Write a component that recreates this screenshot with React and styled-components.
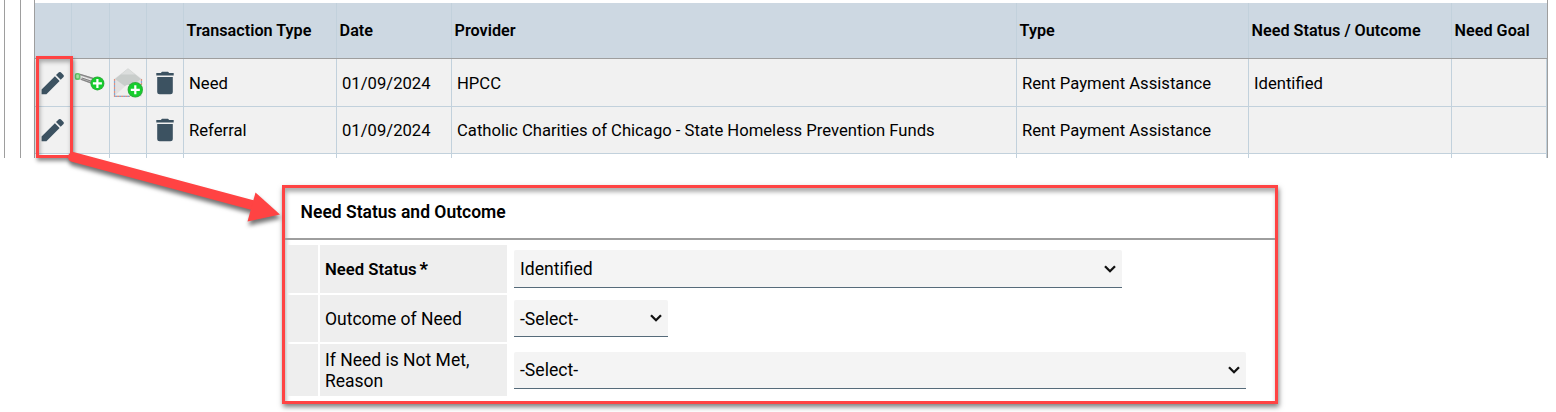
import React from 'react'
import styled, { createGlobalStyle } from 'styled-components'

const columns = ['', '', '', '', 'Transaction Type', 'Date', 'Provider', 'Type', 'Need Status / Outcome', 'Need Goal']

const transactions = [
  {
    id: 1,
    canAdd: true,
    cells: ['Need', '01/09/2024', 'HPCC', 'Rent Payment Assistance', 'Identified', '']
  },
  {
    id: 2,
    canAdd: false,
    cells: ['Referral', '01/09/2024', 'Catholic Charities of Chicago - State Homeless Prevention Funds', 'Rent Payment Assistance', '', '']
  }
]

const PencilIcon = () => (
  <Icon width='24' height='24' viewBox='0 0 24 24'>
    <path fill='#3c5261' d='M0.6 18.4 V23.2 H5.4 L18.6 10 L13.9 5.3 Z M19.7 8.8 L22.5 6 Q23.4 5 22.5 4 L19.8 1.3 Q18.8 .5 17.9 1.3 L15 4.1 Z' />
  </Icon>
)

const TrashIcon = () => (
  <Icon width='18' height='24' viewBox='0 0 18 24'>
    <path fill='#3c5261' d='M1.2 6 H16.8 V20.7 Q16.8 23.2 14.3 23.2 H3.7 Q1.2 23.2 1.2 20.7 Z M.3 2 H4.8 L6 .8 H12 L13.2 2 H17.7 V4.6 H.3 Z' />
  </Icon>
)

const Plus = ({ x, y, r }) => (
  <g>
    <circle cx={x} cy={y} r={r} fill='#2fae3c' />
    <circle cx={x} cy={y} r={r - 1} fill='#14cf2c' />
    <path d={`M${x - 4.5} ${y} h9 M${x} ${y - 4.5} v9`} stroke='#fff' strokeWidth='2.2' />
  </g>
)

const ServiceIcon = () => (
  <Icon width='32' height='24' viewBox='0 0 32 24'>
    <path d='M5 2.5 L25 8.5 L22 14.5 L4 8 Z' fill='#c2c2c2' />
    <path d='M6 3.4 L23 8.6 M7 8.2 L19 12.6' stroke='#858585' strokeWidth='1.2' />
    <path d='M7 5.6 L21 10.2' stroke='#ececec' strokeWidth='1.2' />
    <path d='M8 7 L18 10.4' stroke='#707070' strokeWidth='.8' />
    <rect x='.8' y='2' width='5.4' height='7' rx='2' fill='#62c66a' />
    <rect x='2.2' y='3.6' width='2.6' height='3.6' rx='1' fill='#a8e2a7' />
    <Plus x={23.4} y={12.4} r={7} />
  </Icon>
)

const ReferralIcon = () => (
  <Icon width='32' height='32' viewBox='0 0 32 32'>
    <path d='M2 12 L16 1.5 L30 12 V29.5 H2 Z' fill='#e2e1e1' />
    <path d='M3 12 L16 1.5 L29 12 L18 20 Q16 21 14 20 Z' fill='#c9cdcb' />
    <path d='M9 7.500 L16 1.500 L23 7.500 Z' fill='#dcdedd' />
    <path d='M3 28.500 L14 18.500 Q16 17 18 18.500 L29 28.500 Z' fill='#f0efee' />
    <path d='M2.5 12 V29.4 H18 M29.5 12 V18' fill='none' stroke='#e0907e' strokeWidth='1.2' strokeDasharray='2 2' />
    <path d='M2.5 14 V29.4 H18 M29.5 14 V18' fill='none' stroke='#86a6cf' strokeWidth='1.2' strokeDasharray='2 2' />
    <Plus x={23.3} y={22.8} r={7.7} />
  </Icon>
)

const Select = ({ width, height, children }) => (
  <SelectField $width={width} $height={height}>
    <Value>{children}</Value>
    <svg width='12' height='8' viewBox='0 0 12 8'>
      <path d='M1 1.2 L6 6.2 L11 1.2' fill='none' stroke='#111' strokeWidth='2.3' />
    </svg>
  </SelectField>
)

const App = () => (
  <Page>
    <GlobalStyle />
    <TableArea>
      <Gutter />
      <InnerGutter />
      <Table>
        <Row $head>
          {columns.map((name, i) => <HeadCell key={i}>{name}</HeadCell>)}
        </Row>
        {transactions.map(({ id, canAdd, cells }) => (
          <Row key={id} $height={id === 1 ? 48 : 47}>
            <IconCell $left={6}><PencilIcon /></IconCell>
            <IconCell $left={2}>{canAdd && <ServiceIcon />}</IconCell>
            <IconCell $left={2}>{canAdd && <ReferralIcon />}</IconCell>
            <IconCell $left={9}><TrashIcon /></IconCell>
            {cells.map((text, i) => <Cell key={i} $top={id === 1 ? 2 : 0}>{text}</Cell>)}
          </Row>
        ))}
        <Row $blank>
          {columns.map((name, i) => <Cell key={i} />)}
        </Row>
      </Table>
    </TableArea>
    <Panel>
      <PanelTitle>Need Status and Outcome</PanelTitle>
      <Form>
        <Field $height={48}>
          <Flag />
          <Label $required>Need Status<Star>*</Star></Label>
          <Select width={608} height={38}>Identified</Select>
        </Field>
        <Field $height={47}>
          <Flag />
          <Label>Outcome of Need</Label>
          <Select width={154} height={37}>-Select-</Select>
        </Field>
        <Field $height={52}>
          <Flag />
          <Label>If Need is Not Met, Reason</Label>
          <Select width={732} height={37}>-Select-</Select>
        </Field>
      </Form>
    </Panel>
    <Highlight />
    <Arrow width='230' height='90' viewBox='60 145 230 90'>
      <path d='M73 157 L254 205.500' stroke='#ff4343' strokeWidth='10' strokeLinecap='round' />
      <path d='M255.500 192.500 L280 214.500 L247.500 221.500 Z' fill='#ff4343' />
    </Arrow>
  </Page>
)

const GlobalStyle = createGlobalStyle`
  * {
    box-sizing: border-box;
  }
  body {
    margin: 0;
    background: #fff;
    color: #000;
    font-family: Roboto, sans-serif;
    font-size: 16.65px;
  }
`
const Page = styled.main`
  position: relative;
  width: 1556px;
  height: 412px;
  overflow: hidden;
`
const TableArea = styled.section`
  display: flex;
  height: 158px;
  padding-left: 4px;
`
const Gutter = styled.div`
  width: 16px;
  border-left: 1px solid #9e9e9e;
`
const InnerGutter = styled(Gutter)`
  width: 14px;
`
const Table = styled.div`
  width: 1514px;
  padding-top: 3px;
  border: solid #9e9e9e;
  border-width: 0 1px;
`
const Row = styled.div`
  display: grid;
  grid-template-columns: 37px 38px 37px 37px 153px 115px 565px 232px 203px 95px;
  height: ${({ $head, $blank, $height }) => $head ? 56 : $blank ? 4 : $height}px;
  background: ${({ $head, $blank }) => $head ? '#cdd8e2' : $blank ? '#fff' : '#f1f1f1'};
  border-bottom: ${({ $head, $blank }) => $blank ? '0' : $head ? '1px solid #9e9e9e' : '1px solid #c2d1dc'};
`
const HeadCell = styled.div`
  display: flex;
  align-items: center;
  padding-left: 2.6px;
  border-right: 1px solid #c2d1dc;
  font-size: 16.2px;
  font-weight: 600;
  line-height: 19px;
  white-space: nowrap;
  &:last-child {
    border-right: 0;
  }
`
const Cell = styled.div`
  display: flex;
  align-items: center;
  padding-top: ${({ $top = 0 }) => $top}px;
  padding-left: 5px;
  border-right: 1px solid #c2d1dc;
  white-space: nowrap;
`
const IconCell = styled(Cell)`
  padding-left: ${({ $left }) => $left}px;
`
const Icon = styled.svg`
  flex: none;
`
const Panel = styled.section`
  width: 996px;
  height: 219px;
  margin: 27px 0 0 282px;
  border: 3px solid #ff4343;
  box-shadow: 1px 3px 5px rgba(0, 0, 0, .5), inset 1px 4px 4px rgba(0, 0, 0, .32);
`
const PanelTitle = styled.h2`
  height: 52px;
  margin: 0;
  padding: 14px 0 0 15.600px;
  border-bottom: 2px solid #9e9e9e;
  font-size: 17.5px;
  font-weight: 600;
  line-height: 21px;
`
const Form = styled.div`
  display: grid;
  row-gap: 2px;
  padding: 5px 0 0 3px;
`
const Field = styled.div`
  display: flex;
  align-items: center;
  height: ${({ $height }) => $height}px;
`
const Flag = styled.div`
  width: 30px;
  height: 100%;
  margin-right: 2px;
  background: #eee;
`
const Label = styled.label`
  display: flex;
  align-items: center;
  width: 187px;
  height: 100%;
  margin-right: 7px;
  padding-top: ${({ $required }) => $required ? 0 : 2}px;
  padding-left: 5px;
  background: #eee;
  font-size: ${({ $required }) => $required ? 16.7 : 17.5}px;
  font-weight: ${({ $required }) => $required ? 600 : 400};
  line-height: 21px;
`
const Star = styled.span`
  margin: -1px 0 0 3px;
  font-size: 18px;
  font-weight: 900;
`
const SelectField = styled.div`
  display: flex;
  align-items: center;
  justify-content: space-between;
  width: ${({ $width }) => $width}px;
  height: ${({ $height }) => $height}px;
  padding: 0 6px;
  background: #f4f4f4;
  border-bottom: 1px solid #566b7a;
  border-radius: 2px 2px 0 0;
  font-size: 17.6px;
  line-height: 21px;
`
const Value = styled.span`
  padding-top: 2px;
`
const Highlight = styled.div`
  position: absolute;
  top: 56px;
  left: 36px;
  width: 37px;
  height: 102px;
  border: 3px solid #ff4343;
  box-shadow: 1px 3px 4px rgba(0, 0, 0, .45), inset 1px 3px 4px rgba(0, 0, 0, .3);
`
const Arrow = styled.svg`
  position: absolute;
  top: 145px;
  left: 60px;
  filter: drop-shadow(1px 4px 2px rgba(0, 0, 0, .55));
`

export default App
